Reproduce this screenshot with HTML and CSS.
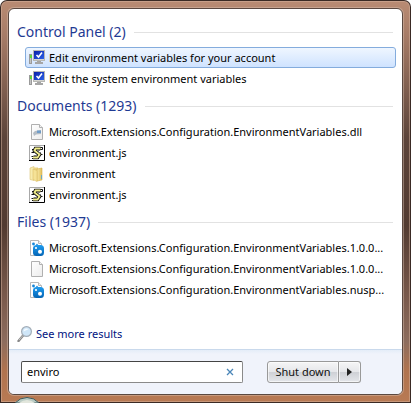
FILE: index.html
```html
<!DOCTYPE html>
<html lang="en">
<head>
<meta charset="utf-8">
<title>Start menu search</title>
<link rel="stylesheet" href="styles.css">
</head>
<body>
<svg class="defs" aria-hidden="true">
  <defs>
    <linearGradient id="g-screen" x1="0" y1="0" x2="1" y2="1"><stop offset="0" stop-color="#0a1fa8"/><stop offset="1" stop-color="#2c62e8"/></linearGradient>
    <linearGradient id="g-folder" x1="0" y1="0" x2="1" y2="0"><stop offset="0" stop-color="#f7e9a8"/><stop offset="1" stop-color="#e3c05a"/></linearGradient>
    <linearGradient id="g-page" x1="0" y1="0" x2="1" y2="1"><stop offset="0" stop-color="#fff"/><stop offset="1" stop-color="#ececec"/></linearGradient>
    <linearGradient id="g-blue" x1="0" y1="0" x2="0" y2="1"><stop offset="0" stop-color="#1f9cf0"/><stop offset="1" stop-color="#0464b4"/></linearGradient>
    <symbol id="i-monitor" viewBox="0 0 16 16">
      <rect x=".5" y="4.500" width="2" height="9" fill="#c4c4c4" stroke="#9a9a9a"/>
      <rect x="1" y="5" width="2" height="3" fill="#5fd83a"/>
      <path d="M8 11h4v1h2v2H6v-2h2z" fill="#a6a6a6"/>
      <rect x="4.500" y=".5" width="11" height="10" fill="#d4d4d0" stroke="#b8b8b4"/>
      <rect x="5" y="1" width="10" height="8" fill="url(#g-screen)"/>
      <path d="M7.500 5l2 2 3.500-4.500" fill="none" stroke="#fff" stroke-width="1.600"/>
    </symbol>
    <symbol id="i-page" viewBox="0 0 16 16">
      <path d="M2.500.5h8l3 3v12h-11z" fill="url(#g-page)" stroke="#b0b0b0"/>
      <path d="M10.500.5v3h3" fill="#f4f4f4" stroke="#b0b0b0"/>
    </symbol>
    <symbol id="i-dll" viewBox="0 0 16 16">
      <use href="#i-page"/>
      <path d="M4 9l2-2 6-1v4l-5 .5L5 12z" fill="#b4bcc4"/>
      <path d="M8 6.500h4V9H8z" fill="#6f9cc8"/>
    </symbol>
    <symbol id="i-script" viewBox="0 0 16 16">
      <path d="M.5 15V.5H15" fill="none" stroke="#a8a8a8"/>
      <rect x="1" y="1" width="14" height="14" fill="#fff"/>
      <path d="M15.500 0v15.500H0" fill="none" stroke="#000"/>
      <path d="M5 2.500h8.500v2H11M3 4.500h2M2.500 7.500H5M10 9.500h3.500M2.500 11.500H5M3 13.500h7" fill="none" stroke="#111"/>
      <path d="M11.500 3.500H6.500L5.500 5.500l5 4-2 3H4" fill="none" stroke="#111" stroke-width="3.600"/>
      <path d="M11.500 3.500H6.500L5.500 5.500l5 4-2 3H4" fill="none" stroke="#f2ee8c" stroke-width="1.800"/>
      <path d="M8 5.500h3M9.500 7.500h2.500M5 10.500h2.500" stroke="#777"/>
    </symbol>
    <symbol id="i-folder" viewBox="0 0 16 16">
      <path d="M1 2l4-1.500v14L1 13.500z" fill="#f8ecae" stroke="#dcc372" stroke-width=".6"/>
      <path d="M5 1.500h4v12H5z" fill="#ecd384"/>
      <path d="M8 3l5-1v12l-5 1z" fill="url(#g-folder)" stroke="#d4b04e" stroke-width=".6"/>
      <path d="M4 3l4 1.500V15.500l-4-2z" fill="#f5e296" stroke="#dcc068" stroke-width=".6"/>
      <path d="M12.500 9v4" stroke="#69a9c8"/>
    </symbol>
    <symbol id="i-nuget" viewBox="0 0 16 16">
      <path d="M1.500.5h8l3 3v12h-11z" fill="#fff" stroke="#b8b8b8"/>
      <path d="M9.500.5v3h3" fill="#eee" stroke="#b8b8b8"/>
      <circle cx="4.500" cy="4" r="1.400" fill="#1686d8"/>
      <circle cx="8" cy="4.500" r=".8" fill="#1686d8"/>
      <rect x="4" y="5" width="11" height="11" rx="3.500" fill="url(#g-blue)"/>
      <circle cx="7" cy="8" r="1.100" fill="#fff"/>
      <circle cx="11" cy="11.700" r="2" fill="#fff"/>
    </symbol>
  </defs>
</svg>

<div class="window">
  <div class="frame">
    <div class="panel">
      <main class="results">
        <section>
          <h2 class="heading">Control Panel (2)</h2>
          <ul class="list">
            <li><a class="row selected" href="#"><svg class="icon"><use href="#i-monitor"/></svg><span class="name">Edit environment variables for your account</span></a></li>
            <li><a class="row" href="#"><svg class="icon"><use href="#i-monitor"/></svg><span class="name">Edit the system environment variables</span></a></li>
          </ul>
        </section>
        <section>
          <h2 class="heading">Documents (1293)</h2>
          <ul class="list">
            <li><a class="row" href="#"><svg class="icon"><use href="#i-dll"/></svg><span class="name">Microsoft.Extensions.Configuration.EnvironmentVariables.dll</span></a></li>
            <li><a class="row" href="#"><svg class="icon"><use href="#i-script"/></svg><span class="name">environment.js</span></a></li>
            <li><a class="row" href="#"><svg class="icon"><use href="#i-folder"/></svg><span class="name">environment</span></a></li>
            <li><a class="row" href="#"><svg class="icon"><use href="#i-script"/></svg><span class="name">environment.js</span></a></li>
          </ul>
        </section>
        <section>
          <h2 class="heading">Files (1937)</h2>
          <ul class="list">
            <li><a class="row" href="#"><svg class="icon"><use href="#i-nuget"/></svg><span class="name">Microsoft.Extensions.Configuration.EnvironmentVariables.1.0.0...</span></a></li>
            <li><a class="row" href="#"><svg class="icon"><use href="#i-page"/></svg><span class="name">Microsoft.Extensions.Configuration.EnvironmentVariables.1.0.0...</span></a></li>
            <li><a class="row" href="#"><svg class="icon"><use href="#i-nuget"/></svg><span class="name">Microsoft.Extensions.Configuration.EnvironmentVariables.nusp...</span></a></li>
          </ul>
        </section>
        <a class="more" href="#">
          <svg class="icon" viewBox="0 0 16 16"><path d="M1.500 15l5-6" stroke="#888" stroke-width="2.400" stroke-linecap="round"/><path d="M2 14l4-4.500" stroke="#c4c4c4"/><circle cx="9.500" cy="5.500" r="4.900" fill="#cfe6f8" stroke="#a4aeb8" stroke-width="1.200"/><path d="M6.500 5.500a3 3 0 0 1 5-2.200z" fill="#f4faff"/></svg>
          <span>See more results</span>
        </a>
      </main>
      <footer class="footer">
        <div class="search">
          <input class="query" type="text" value="enviro" aria-label="Search programs and files">
          <button class="clear" type="button" aria-label="Clear search"><svg class="cross" viewBox="0 0 8 8"><path d="M1 1l6 6M7 1L1 7" stroke="#4a86b8" stroke-width="1.300"/></svg></button>
        </div>
        <div class="power">
          <button class="btn main" type="button">Shut down</button>
          <button class="btn arrow" type="button" aria-label="More power options"><svg class="tri" viewBox="0 0 5 8"><path d="M0 0l5 4-5 4z" fill="#222"/></svg></button>
        </div>
      </footer>
    </div>
  </div>
  <svg class="orb" viewBox="0 0 30 6" aria-hidden="true"><path d="M2 6Q7 .5 14 .5T26 6z" fill="#b9cbc4" stroke="#3d5a5c"/><path d="M6 6q8-6 16 0z" fill="#e2e6dc"/></svg>
</div>
</body>
</html>
```
FILE: styles.css
```css
* {
  box-sizing: border-box;
}

body {
  margin: 0;
  background: #fff;
  color: #000;
  font: 11px/16px "Noto Sans", "Open Sans", sans-serif;
}

.defs {
  position: absolute;
  width: 0;
  height: 0;
}

.window {
  position: relative;
  display: flex;
  min-height: 100vh;
  padding: 1px;
  overflow: hidden;
  border-radius: 7px 7px 0 0;
  background: #3a2a24;
}

.frame {
  display: flex;
  flex: 1;
  min-width: 0;
  padding: 6px;
  border: 1px solid rgba(214, 180, 160, 0.5);
  border-radius: 6px 6px 0 0;
  background: linear-gradient(#b98b73 0, #a87d68 8%, #5c443a 34%, #523b31 56%, #7a5a4c 74%, #8d6d5e 85%, #b0734e 92%, #b87a54 100%) border-box;
}

.panel {
  display: flex;
  flex: 1;
  flex-direction: column;
  min-width: 0;
  overflow: hidden;
  border: 1px solid #5a4840;
  border-radius: 6px;
  background: #fff;
  box-shadow: 0 0 0 1px rgba(220, 195, 180, 0.45);
}

.results {
  display: flex;
  flex: 1;
  flex-direction: column;
  padding: 6px 6px 7px 8px;
}

.heading {
  display: flex;
  align-items: center;
  gap: 8px;
  height: 32px;
  margin: 0;
  padding: 2px 3px 0 0;
  color: #1f3a93;
  font-size: 14px;
  font-weight: 400;
  line-height: 20px;
}

.heading::after {
  flex: 1;
  height: 1px;
  background: #e2e2e2;
  content: "";
}

.list {
  margin: 0;
  padding: 0 0 0 8px;
  list-style: none;
}

.row {
  display: flex;
  align-items: center;
  gap: 4px;
  height: 21px;
  padding: 0 3px;
  border: 1px solid transparent;
  border-radius: 3px;
  color: #000;
  text-decoration: none;
}

.selected {
  border-color: #84acdd;
  background: linear-gradient(#eff6ff, #cfe3ff);
}

.name {
  min-width: 0;
  white-space: nowrap;
}

.icon {
  flex: none;
  width: 16px;
  height: 16px;
}

.more {
  display: flex;
  align-items: center;
  gap: 3px;
  margin-top: auto;
  color: #00137f;
  text-decoration: none;
}

.footer {
  display: flex;
  align-items: center;
  gap: 24px;
  height: 45px;
  padding: 0 41px 0 12px;
  border-top: 1px solid #c9d9ec;
  background: linear-gradient(#e4edf8, #f0f3fb 4px);
}

.search {
  display: flex;
  flex: 1;
  align-items: center;
  height: 22px;
  min-width: 0;
  border: 1px solid #8a8a8a;
  border-top-color: #444;
  border-left-color: #555;
  border-radius: 2px;
  background: #fff;
}

.query {
  flex: 1;
  min-width: 0;
  padding: 0 5px;
  border: 0;
  outline: 0;
  background: none;
  color: #000;
  font: inherit;
}

.clear {
  display: flex;
  padding: 0 8px;
  border: 0;
  background: none;
}

.cross {
  width: 8px;
  height: 8px;
}

.power {
  display: flex;
  height: 22px;
}

.btn {
  display: flex;
  align-items: center;
  justify-content: center;
  padding: 0;
  border: 1px solid #999;
  background: linear-gradient(#f5f5f6 0, #e6e7ea 48%, #cfd1d6 52%, #e4e6ea 100%);
  box-shadow: inset 0 0 0 1px rgba(255, 255, 255, 0.6);
  color: #111;
  font: inherit;
}

.main {
  width: 72px;
  border-radius: 3px 0 0 3px;
}

.arrow {
  width: 22px;
  border-left: 0;
  border-radius: 0 3px 3px 0;
}

.tri {
  width: 5px;
  height: 8px;
}

.orb {
  position: absolute;
  bottom: 0;
  left: 13px;
  width: 30px;
  height: 6px;
}
```
